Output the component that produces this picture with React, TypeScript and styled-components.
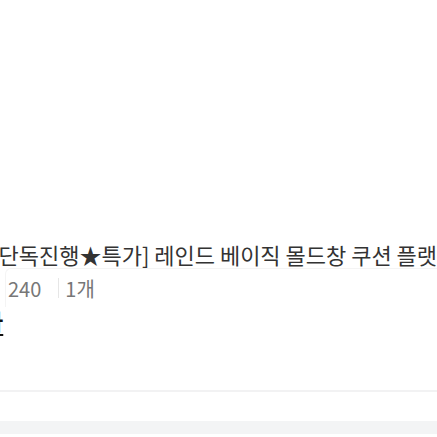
import styled, { createGlobalStyle } from "styled-components";

const GlobalStyle = createGlobalStyle`
  html, body {
    margin: 0;
    padding: 0;
    background: #fff;
  }
  body {
    font-family: "Noto Sans CJK KR", "Noto Sans", sans-serif;
    color: #333;
  }
`;

const Page = styled.div`
  width: 437px;
  height: 437px;
  overflow: hidden;
  display: flex;
  flex-direction: column;
`;

const Card = styled.article`
  padding-top: 240px;
  margin-left: -9px;
  display: flex;
  flex-direction: column;
  align-items: flex-start;
`;

const Title = styled.h3`
  margin: 0;
  font-size: 22px;
  font-weight: 400;
  line-height: 28px;
  letter-spacing: 0;
  color: #333;
  white-space: nowrap;
`;

const Meta = styled.div`
  margin-left: 14px;
  align-self: stretch;
  display: flex;
  align-items: center;
  height: 38px;
  border-top: 1px solid #f4f4f4;
  border-left: 1px solid #f4f4f4;
  border-top-left-radius: 6px;
  padding-left: 2px;
  font-size: 20px;
  color: #777;
`;

const MetaItem = styled.span<{ $divider?: boolean }>`
  display: inline-flex;
  align-items: center;
  ${({ $divider }) =>
    $divider &&
    `
    &::before {
      content: "";
      display: inline-block;
      width: 1px;
      height: 20px;
      background: #e6e6e6;
      margin: 0 6px 0 17px;
    }
  `}
`;

const Price = styled.a`
  margin-left: -8px;
  font-size: 22px;
  font-weight: 700;
  line-height: 26px;
  color: #111;
  text-decoration: underline;
  text-underline-offset: 4px;
`;

const Divider = styled.hr`
  margin: 57px 0 0;
  border: none;
  height: 2px;
  background: #f2f2f3;
`;

const Band = styled.div`
  margin-top: 29px;
  height: 13px;
  background: #f3f4f5;
`;

export default function App() {
  return (
    <Page>
      <GlobalStyle />
      <Card>
        <Title>[단독진행★특가] 레인드 베이직 몰드창 쿠션 플랫 슈즈</Title>
        <Meta>
          <MetaItem>240</MetaItem>
          <MetaItem $divider>1개</MetaItem>
        </Meta>
        <Price>가</Price>
      </Card>
      <Divider />
      <Band />
    </Page>
  );
}
